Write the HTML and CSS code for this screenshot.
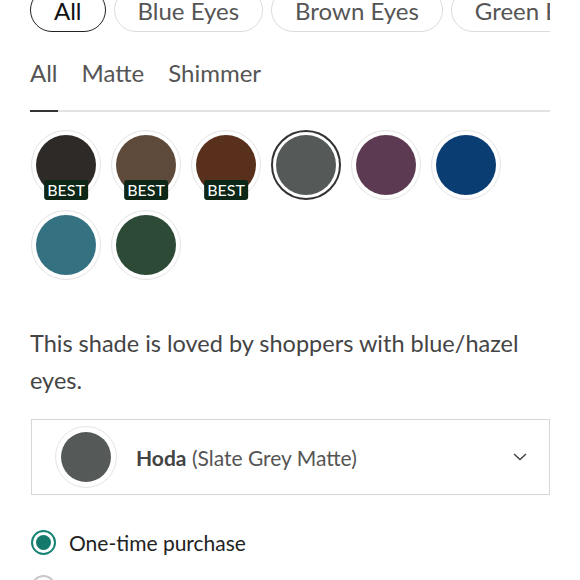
FILE: index.html
```html
<!DOCTYPE html>
<html lang="en">
<head>
  <meta charset="UTF-8" />
  <meta name="viewport" content="width=device-width, initial-scale=1.0"/>
  <title>Shade Picker</title>
  <link rel="stylesheet" href="styles.css">
</head>
<body>
  <div class="picker">
    <div class="chips">
      <span class="chip active">All</span>
      <span class="chip">Blue Eyes</span>
      <span class="chip">Brown Eyes</span>
      <span class="chip">Green Eyes</span>
    </div>

    <div class="tabs">
      <span class="tab active">All</span>
      <span class="tab">Matte</span>
      <span class="tab">Shimmer</span>
    </div>

    <div class="swatches">
      <div class="swatch"><span class="dot" style="background:#2e2a27"></span><span class="best">BEST</span></div>
      <div class="swatch"><span class="dot" style="background:#5e4a3b"></span><span class="best">BEST</span></div>
      <div class="swatch"><span class="dot" style="background:#58301c"></span><span class="best">BEST</span></div>
      <div class="swatch selected"><span class="dot" style="background:#555a59"></span></div>
      <div class="swatch"><span class="dot" style="background:#5c3b52"></span></div>
      <div class="swatch"><span class="dot" style="background:#0a3d72"></span></div>
      <div class="swatch"><span class="dot" style="background:#347282"></span></div>
      <div class="swatch"><span class="dot" style="background:#2c4a36"></span></div>
    </div>

    <p class="note">This shade is loved by shoppers with blue/hazel eyes.</p>

    <div class="select">
      <div class="swatch small"><span class="dot" style="background:#555a59"></span></div>
      <div class="select-label"><b>Hoda</b> (Slate Grey Matte)</div>
      <svg class="chevron" width="14" height="8" viewBox="0 0 14 8">
        <path d="M1 1l6 5.5L13 1" fill="none" stroke="#444" stroke-width="1.5"/>
      </svg>
    </div>

    <div class="options">
      <label class="option"><span class="radio checked"></span>One-time purchase</label>
      <label class="option"><span class="radio"></span>Subscribe &amp; save</label>
    </div>
  </div>
</body>
</html>
```

FILE: styles.css
```css
html, body {
  margin: 0;
  height: 100%;
  overflow: hidden;
  background: #fff;
  font-family: Lato, "Open Sans", sans-serif;
  color: #444;
}
.picker {
  width: 520px;
  padding: 0 30px;
}
.chips {
  display: flex;
  gap: 8px;
  margin-top: -12px;
  overflow: hidden;
  white-space: nowrap;
}
.chip {
  flex-shrink: 0;
  height: 44px;
  box-sizing: border-box;
  display: flex;
  align-items: center;
  padding: 0 23px;
  border: 1.5px solid #dcdcdc;
  border-radius: 22px;
  font-size: 24px;
  color: #555;
}
.chip.active {
  border-color: #222;
  color: #111;
}
.tabs {
  display: flex;
  gap: 24px;
  margin-top: 26px;
  border-bottom: 2px solid #e2e2e2;
}
.tab {
  font-size: 24px;
  line-height: 29px;
  padding-bottom: 23px;
  margin-bottom: -2px;
  color: #555;
}
.tab.active {
  border-bottom: 2px solid #333;
}
.swatches {
  display: grid;
  grid-template-columns: repeat(6, 70px);
  gap: 10px;
  margin-top: 18px;
  padding-left: 1px;
}
.swatch {
  position: relative;
  width: 70px;
  height: 70px;
  box-sizing: border-box;
  border: 1px solid #e4e4e4;
  border-radius: 50%;
  padding: 4px;
  background: #fff;
}
.swatch.selected {
  border: 2px solid #333;
  padding: 3px;
}
.dot {
  display: block;
  width: 100%;
  height: 100%;
  border-radius: 50%;
}
.best {
  position: absolute;
  left: 50%;
  bottom: -1px;
  transform: translateX(-50%);
  background: #0c2715;
  color: #fff;
  font-size: 16px;
  line-height: 20px;
  padding: 0 3px;
  border-radius: 3px;
}
.note {
  margin: 45px 0 0;
  font-size: 23.5px;
  line-height: 37px;
  color: #444;
}
.select {
  display: flex;
  align-items: center;
  height: 76px;
  box-sizing: border-box;
  margin: 20px 0 0 1px;
  padding: 0 22px 0 23px;
  border: 1.5px solid #d6d6d6;
}
.swatch.small {
  width: 62px;
  height: 62px;
  padding: 5px;
}
.select-label {
  flex: 1;
  margin-left: 19px;
  font-size: 21px;
  color: #555;
}
.select-label b {
  color: #444;
}
.chevron {
  display: block;
}
.options {
  display: flex;
  flex-direction: column;
  gap: 20px;
  margin-top: 35px;
}
.option {
  display: flex;
  align-items: center;
  gap: 13px;
  font-size: 21px;
  color: #222;
}
.radio {
  width: 25px;
  height: 25px;
  box-sizing: border-box;
  border: 2px solid #c8c8c8;
  border-radius: 50%;
  padding: 3px;
  margin-left: 1px;
}
.radio.checked {
  border-color: #168273;
}
.radio.checked::after {
  content: "";
  display: block;
  width: 100%;
  height: 100%;
  border-radius: 50%;
  background: #137a6b;
}
```
